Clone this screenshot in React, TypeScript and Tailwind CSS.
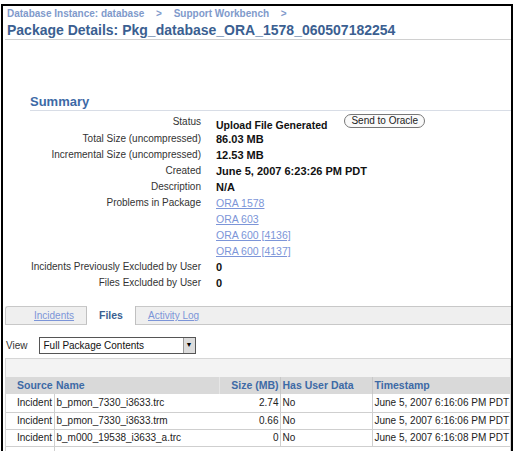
import React from 'react';

const font = { fontFamily: '"Liberation Sans", Arial, sans-serif' };

const summaryRows: { label: string; value: React.ReactNode }[] = [
  { label: 'Total Size (uncompressed)', value: <b>86.03 MB</b> },
  { label: 'Incremental Size (uncompressed)', value: <b>12.53 MB</b> },
  { label: 'Created', value: <b>June 5, 2007 6:23:26 PM PDT</b> },
  { label: 'Description', value: <b>N/A</b> },
];

const problems = ['ORA 1578', 'ORA 603', 'ORA 600 [4136]', 'ORA 600 [4137]'];

const files = [
  { source: 'Incident', name: 'b_pmon_7330_i3633.trc', size: '2.74', user: 'No', ts: 'June 5, 2007 6:16:06 PM PDT' },
  { source: 'Incident', name: 'b_pmon_7330_i3633.trm', size: '0.66', user: 'No', ts: 'June 5, 2007 6:16:06 PM PDT' },
  { source: 'Incident', name: 'b_m000_19538_i3633_a.trc', size: '0', user: 'No', ts: 'June 5, 2007 6:16:08 PM PDT' },
];

function Label({ children }: { children: React.ReactNode }) {
  return <div className="w-[198px] shrink-0 text-right text-[10px] text-[#333]">{children}</div>;
}

export default function App() {
  return (
    <div className="h-[451px] w-[516px] overflow-hidden bg-white pl-[1px] pt-[4px] text-[11px]" style={font}>
      <div className="h-[460px] w-[512px] border-2 border-b-0 border-black">
        {/* header */}
        <div className="pl-[4px] pt-[1px] text-[10px] font-bold leading-[14px] text-[#7f9acb]">
          Database Instance: database <span className="mx-[9px]">&gt;</span> Support Workbench <span className="ml-[9px]">&gt;</span>
        </div>
        <div className="ml-[2px] border-b border-[#d0d0d0] pl-[2px] text-[14px] font-bold leading-[18px] text-[#3b5f91]">
          Package Details: Pkg_database_ORA_1578_060507182254
        </div>

        {/* summary */}
        <div className="ml-[27px] mt-[54px] border-b border-[#d8dde6] text-[13px] font-bold leading-[16px] text-[#3d6aa6]">
          Summary
        </div>
        <div className="mt-[2px] leading-[14px]">
          <div className="flex h-[18px] items-center">
            <Label>Status</Label>
            <b className="ml-[15px] mt-[5px] text-[10.5px] text-[#111]">Upload File Generated</b>
            <button className="ml-[17px] mb-[3px] h-[14px] rounded-[7px] border border-[#777] bg-[#fafafa] px-[6px] text-[10px] leading-[12px] text-[#222]">
              Send to Oracle
            </button>
          </div>
          {summaryRows.map((r) => (
            <div key={r.label} className="flex h-[16px] items-center">
              <Label>{r.label}</Label>
              <div className="ml-[15px] text-[11px] text-[#111]">{r.value}</div>
            </div>
          ))}
          {problems.map((p, i) => (
            <div key={p} className="flex h-[16px] items-center">
              <Label>{i === 0 ? 'Problems in Package' : ''}</Label>
              <a className="ml-[15px] text-[10.5px] text-[#7c95d8] underline">{p}</a>
            </div>
          ))}
          <div className="flex h-[16px] items-center">
            <Label>Incidents Previously Excluded by User</Label>
            <b className="ml-[15px] text-[#111]">0</b>
          </div>
          <div className="flex h-[16px] items-center">
            <Label>Files Excluded by User</Label>
            <b className="ml-[15px] text-[#111]">0</b>
          </div>
        </div>

        {/* tabs */}
        <div className="ml-[2px] mt-[15px] flex h-[19px] items-end rounded-tl-[3px] border-t border-b border-l border-[#c8c8c8] bg-[#efefef] pl-[28px] text-[10px]">
          <div className="flex h-full items-center border-r border-[#c0c0c0] pr-[12px] text-[#7c95d8] underline">Incidents</div>
          <div className="relative -mb-px flex h-[19px] items-center border-r border-[#c0c0c0] bg-white px-[12px] text-[10.5px] font-bold text-[#3b5f91]">
            Files
          </div>
          <div className="flex h-full items-center pl-[12px] text-[#7c95d8] underline">Activity Log</div>
        </div>

        {/* view */}
        <div className="mt-[12px] flex items-center pl-[3px] text-[10px]">
          <span className="text-[#333]">View</span>
          <div className="ml-[11px] flex h-[17px] w-[157px] items-center border border-[#555] bg-white">
            <span className="flex-1 pl-[4px] text-[#111]">Full Package Contents</span>
            <span className="flex h-[15px] w-[12px] items-center justify-center border-l border-[#999] bg-[#dcdcdc] text-[7px] text-black">▼</span>
          </div>
        </div>

        {/* table */}
        <div className="ml-[2px] mt-[4px] border border-[#d6d6d6] bg-[#f3f3f3] pt-[18px]">
          <table className="w-full table-fixed border-collapse bg-white text-[10px]">
            <colgroup>
              <col className="w-[48px]" />
              <col className="w-[165px]" />
              <col className="w-[61px]" />
              <col className="w-[92px]" />
              <col />
            </colgroup>
            <thead>
              <tr className="h-[17px] bg-[#d9d9d9] text-left text-[10.5px] font-bold text-[#3d6aa6]">
                <th className="pl-[11px] font-bold whitespace-nowrap">Source</th>
                <th className="pl-[2px] font-bold">Name</th>
                <th className="border-l border-[#e6e6e6] pr-[1px] text-right font-bold whitespace-nowrap">Size (MB)</th>
                <th className="border-l border-[#c8c8c8] pl-[2px] font-bold whitespace-nowrap">Has User Data</th>
                <th className="border-l border-[#c8c8c8] pl-[2px] font-bold">Timestamp</th>
              </tr>
            </thead>
            <tbody className="text-[#222]">
              {files.map((f, i) => (
                <tr key={f.name} className={`${i === 0 ? 'h-[18px]' : 'h-[17px]'} border-b border-[#cfcfcf]`}>
                  <td className="pl-[11px] whitespace-nowrap">{f.source}</td>
                  <td className="border-l border-[#cfcfcf] pl-[2px] whitespace-nowrap">{f.name}</td>
                  <td className="pr-[1px] text-right">{f.size}</td>
                  <td className="border-l border-[#cfcfcf] pl-[2px]">{f.user}</td>
                  <td className="border-l border-[#cfcfcf] pl-[2px] whitespace-nowrap">{f.ts}</td>
                </tr>
              ))}
              <tr className="h-[20px]">
                <td></td>
                <td className="border-l border-[#cfcfcf]"></td>
                <td></td>
                <td></td>
                <td></td>
              </tr>
            </tbody>
          </table>
        </div>
      </div>
    </div>
  );
}
